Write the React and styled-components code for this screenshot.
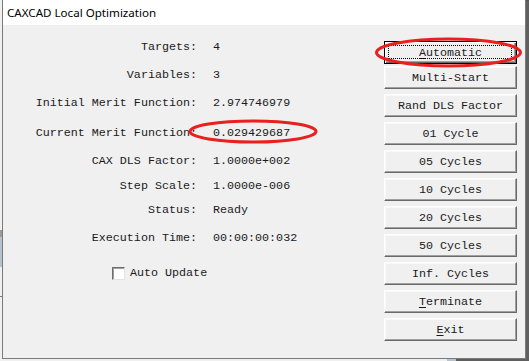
import React from "react";
import styled, { createGlobalStyle } from "styled-components";

const GlobalStyle = createGlobalStyle`
  html, body {
    margin: 0;
    padding: 0;
    background: #f0f0f0;
  }
  body {
    width: 529px;
    height: 361px;
    overflow: hidden;
  }
`;

const mono = `"Liberation Mono", "Courier New", monospace`;

const rows = [
  { label: "Targets:", value: "4", gap: 12 },
  { label: "Variables:", value: "3", gap: 8 },
  { label: "Initial Merit Function:", value: "2.974746979", gap: 8 },
  { label: "Current Merit Function:", value: "0.029429687", gap: 10 },
  { label: "CAX DLS Factor:", value: "1.0000e+002", gap: 8 },
  { label: "Step Scale:", value: "1.0000e-006", gap: 5 },
  { label: "Status:", value: "Ready", gap: 4 },
  { label: "Execution Time:", value: "00:00:00:032", gap: 8 },
];

const buttons = [
  { text: "Automatic", key: "A", isDefault: true, gap: 2 },
  { text: "Multi-Start" },
  { text: "Rand DLS Factor" },
  { text: "01 Cycle" },
  { text: "05 Cycles" },
  { text: "10 Cycles" },
  { text: "20 Cycles" },
  { text: "50 Cycles" },
  { text: "Inf. Cycles" },
  { text: "Terminate", key: "T" },
  { text: "Exit", key: "E" },
];

const Desktop = styled.div`
  position: relative;
  width: 529px;
  height: 361px;
  background: #f0f0f0;
  overflow: hidden;
`;

const Backdrop = styled.div`
  position: absolute;
  background: ${({ $color }) => $color};
`;

const Window = styled.div`
  position: absolute;
  left: 2px;
  top: 0;
  width: 524px;
  height: 359px;
  box-sizing: border-box;
  border: 1px solid #7a7a7a;
  border-top: none;
  background: #f0f0f0;
  display: flex;
  flex-direction: column;
`;

const TitleBar = styled.div`
  height: 25px;
  flex: none;
  background: #ffffff;
  display: flex;
  align-items: center;
  padding-left: 4px;
  font-family: "Noto Sans", "Open Sans", sans-serif;
  font-size: 11.6px;
  color: #000;
`;

const Body = styled.div`
  flex: 1;
  display: flex;
  position: relative;
`;

const InfoPanel = styled.div`
  flex: 1;
  display: flex;
  flex-direction: column;
`;

const InfoRow = styled.div`
  display: flex;
  align-items: center;
  height: 20px;
  margin-top: ${({ $gap }) => $gap}px;
  font-family: ${mono};
  font-size: 11.7px;
  color: #1a1a1a;
  white-space: pre;
`;

const Label = styled.span`
  width: 194px;
  text-align: right;
`;

const Value = styled.span`
  margin-left: 16px;
`;

const CheckRow = styled.label`
  display: flex;
  align-items: center;
  height: 20px;
  margin-top: 15px;
  padding-left: 109px;
  font-family: ${mono};
  font-size: 11.7px;
  color: #1a1a1a;
`;

const CheckBox = styled.span`
  width: 13px;
  height: 13px;
  box-sizing: border-box;
  background: #fff;
  border: 1px solid;
  border-color: #6d6d6d #e3e3e3 #e3e3e3 #6d6d6d;
  box-shadow: inset 1px 1px #a0a0a0;
  margin-right: 5px;
`;

const ButtonColumn = styled.div`
  width: 133px;
  margin-right: 8px;
  padding-top: 16px;
  display: flex;
  flex-direction: column;
`;

const Button = styled.div`
  position: relative;
  height: 23px;
  margin-bottom: ${({ $gap }) => $gap}px;
  box-sizing: border-box;
  display: flex;
  align-items: center;
  justify-content: center;
  background: #f0f0f0;
  font-family: ${mono};
  font-size: 11.7px;
  color: #1a1a1a;
  border: 1px solid;
  border-color: ${({ $default }) =>
    $default ? "#000 #000 #000 #000" : "#ffffff #696969 #696969 #ffffff"};
  box-shadow: ${({ $default }) =>
    $default
      ? "inset 1px 1px #ffffff, inset -1px -1px #696969, inset -2px -2px #a0a0a0"
      : "inset -1px -1px #a0a0a0, inset 1px 1px #f8f8f8"};
`;

const FocusRing = styled.span`
  position: absolute;
  inset: 3px 4px 4px 3px;
  border: 1px dotted #000;
`;

const Mnemonic = styled.u`
  text-underline-offset: 2px;
`;

const Annotation = styled.svg`
  position: absolute;
  left: 0;
  top: 0;
  pointer-events: none;
`;

const ButtonLabel = ({ text, mkey }) => {
  if (!mkey) return text;
  const i = text.indexOf(mkey);
  return (
    <span>
      {text.slice(0, i)}
      <Mnemonic>{text[i]}</Mnemonic>
      {text.slice(i + 1)}
    </span>
  );
};

export default function App() {
  return (
    <Desktop>
      <GlobalStyle />
      <Backdrop $color="#5f5f5f" style={{ left: 526, top: 0, width: 3, height: 361 }} />
      <Backdrop $color="#555" style={{ left: 264, top: 0, width: 265, height: 1 }} />
      <Backdrop $color="#9a9a9a" style={{ left: 0, top: 230, width: 2, height: 7 }} />
      <Backdrop $color="#b6c3cf" style={{ left: 0, top: 237, width: 2, height: 30 }} />
      <Backdrop $color="#7a7a7a" style={{ left: 0, top: 296, width: 2, height: 1 }} />
      <Backdrop $color="#b6c3cf" style={{ left: 447, top: 359, width: 9, height: 2 }} />
      <Backdrop $color="#5f5f5f" style={{ left: 456, top: 359, width: 73, height: 2 }} />
      <Window>
        <TitleBar>CAXCAD Local Optimization</TitleBar>
        <Body>
          <InfoPanel>
            {rows.map((r) => (
              <InfoRow key={r.label} $gap={r.gap}>
                <Label>{r.label}</Label>
                <Value>{r.value}</Value>
              </InfoRow>
            ))}
            <CheckRow>
              <CheckBox />
              Auto Update
            </CheckRow>
          </InfoPanel>
          <ButtonColumn>
            {buttons.map((b) => (
              <Button key={b.text} $default={b.isDefault} $gap={b.gap ?? 5}>
                {b.isDefault && <FocusRing />}
                <ButtonLabel text={b.text} mkey={b.key} />
              </Button>
            ))}
          </ButtonColumn>
        </Body>
      </Window>
      <Annotation width="529" height="361" viewBox="0 0 529 361">
        <ellipse cx="448.5" cy="52.5" rx="72" ry="13.5" fill="none" stroke="#e8201e" strokeWidth="3" />
        <ellipse cx="253" cy="131.5" rx="63" ry="10.5" fill="none" stroke="#e8201e" strokeWidth="3" />
      </Annotation>
    </Desktop>
  );
}
